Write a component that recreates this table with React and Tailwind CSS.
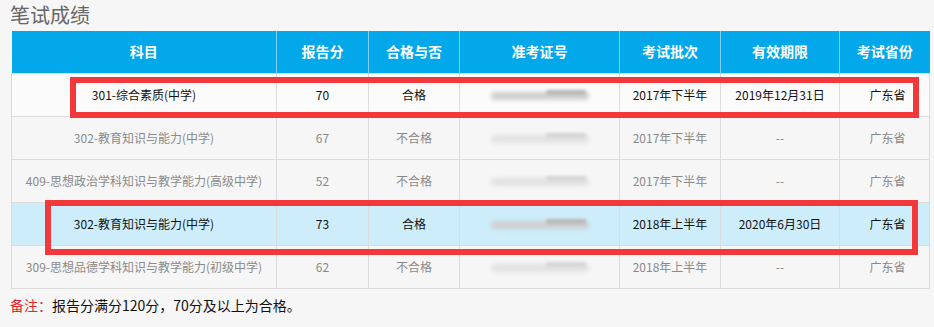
import React from "react";

const cols = [265, 92, 91, 160, 101, 119, 90];
const headers = ["科目", "报告分", "合格与否", "准考证号", "考试批次", "有效期限", "考试省份"];

const rows = [
  { subj: "301-综合素质(中学)", score: "70", pass: "合格", batch: "2017年下半年", valid: "2019年12月31日", bg: "bg-[#fbfbfb]", dark: true },
  { subj: "302-教育知识与能力(中学)", score: "67", pass: "不合格", batch: "2017年下半年", valid: "--", bg: "bg-[#f6f6f6]", dark: false },
  { subj: "409-思想政治学科知识与教学能力(高级中学)", score: "52", pass: "不合格", batch: "2017年下半年", valid: "--", bg: "bg-[#f6f6f6]", dark: false },
  { subj: "302-教育知识与能力(中学)", score: "73", pass: "合格", batch: "2018年上半年", valid: "2020年6月30日", bg: "bg-[#cdedfb]", dark: true },
  { subj: "309-思想品德学科知识与教学能力(初级中学)", score: "62", pass: "不合格", batch: "2018年上半年", valid: "--", bg: "bg-[#f6f6f6]", dark: false },
];

function Blur({ dark }) {
  return (
    <div className="flex justify-center">
      <div className="relative w-[98px] h-[12px]">
        <div className={`absolute left-0 top-[3px] w-[98px] h-[8px] rounded-full blur-[2px] ${dark ? "bg-[#cfcfcf]" : "bg-[#e2e2e2]"}`} />
        <div className={`absolute left-[55px] top-[1px] w-[40px] h-[5px] rounded-full blur-[1.5px] ${dark ? "bg-[#b8b8b8]" : "bg-[#d6d6d6]"}`} />
      </div>
    </div>
  );
}

export default function App() {
  return (
    <div
      className="relative w-[934px] h-[327px] bg-[#f6f6f6] overflow-hidden"
      style={{ fontFamily: '"Noto Sans CJK SC", "Noto Sans", sans-serif' }}
    >
      <div className="h-[31px] pl-[10px] pt-[1px] text-[20px] leading-[28px] text-[#666]">笔试成绩</div>
      <div className="ml-[11px] w-[918px]">
        <table className="border-collapse table-fixed w-[918px]">
          <colgroup>
            {cols.map((w, i) => (
              <col key={i} style={{ width: w }} />
            ))}
          </colgroup>
          <thead>
            <tr className="h-[42px] bg-[#02a8ea]">
              {headers.map((h, i) => (
                <th
                  key={i}
                  className={`p-0 text-[14px] font-bold text-white text-center ${i > 0 ? "border-l border-[#7fd0f2]" : ""}`}
                >
                  {h}
                </th>
              ))}
            </tr>
          </thead>
          <tbody>
            {rows.map((r, i) => {
              const tc = r.dark ? "text-[#111]" : "text-[#8a8a8a]";
              const cell = `p-0 h-[43px] text-center text-[12px] border border-[#dcdcdc] ${tc}`;
              return (
                <tr key={i} className={r.bg}>
                  <td className={cell}>{r.subj}</td>
                  <td className={cell}>{r.score}</td>
                  <td className={cell}>{r.pass}</td>
                  <td className={cell}>
                    <Blur dark={r.dark} />
                  </td>
                  <td className={cell}>{r.batch}</td>
                  <td className={cell}>{r.valid}</td>
                  <td className={cell}>
                    <span className="pl-[6px]">广东省</span>
                  </td>
                </tr>
              );
            })}
          </tbody>
        </table>
      </div>
      <div className="pl-[10px] pt-[6px] text-[14px] leading-[20px] text-[#111]">
        <span className="text-[#e0262a]">备注：</span>报告分满分120分，70分及以上为合格。
      </div>

      <div className="absolute left-[70px] top-[77px] w-[849px] h-[41px] border-[6px] border-[#f2383a] pointer-events-none" />
      <div className="absolute left-[45px] top-[200px] w-[873px] h-[55px] border-[6px] border-[#f2383a] pointer-events-none" />
    </div>
  );
}
